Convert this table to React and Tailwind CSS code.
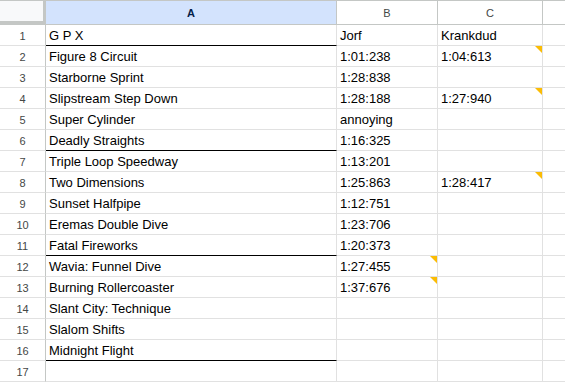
import React from "react"

const rows = [
  ["G P X", "Jorf", "Krankdud"],
  ["Figure 8 Circuit", "1:01:238", "1:04:613"],
  ["Starborne Sprint", "1:28:838", ""],
  ["Slipstream Step Down", "1:28:188", "1:27:940"],
  ["Super Cylinder", "annoying", ""],
  ["Deadly Straights", "1:16:325", ""],
  ["Triple Loop Speedway", "1:13:201", ""],
  ["Two Dimensions", "1:25:863", "1:28:417"],
  ["Sunset Halfpipe", "1:12:751", ""],
  ["Eremas Double Dive", "1:23:706", ""],
  ["Fatal Fireworks", "1:20:373", ""],
  ["Wavia: Funnel Dive", "1:27:455", ""],
  ["Burning Rollercoaster", "1:37:676", ""],
  ["Slant City: Technique", "", ""],
  ["Slalom Shifts", "", ""],
  ["Midnight Flight", "", ""],
  ["", "", ""],
]

// filas con linea negra debajo en la columna A
const blackRows = [1, 6, 11, 16]
// celdas con nota (triangulo naranja)
const notes = { "2-C": true, "4-C": true, "8-C": true, "12-B": true, "13-B": true }

function Note() {
  return (
    <span className="absolute top-0 right-0 w-0 h-0 border-l-[7px] border-l-transparent border-t-[7px] border-t-[#fbbc04]" />
  )
}

export default function App() {
  return (
    <div
      className="w-[565px] h-[382px] overflow-hidden bg-white text-[13px] text-black"
      style={{ fontFamily: "'Liberation Sans', Arial, sans-serif" }}
    >
      <div className="grid grid-cols-[46px_291px_101px_105px_1fr]">
        {/* cabecera */}
        <div className="h-[25px] bg-[#f8f9fa] border-r-[3px] border-b-[4px] border-[#c4c7c5] border-t border-t-[#c4c7c5]" />
        <div className="h-[25px] pt-[2px] bg-[#d3e3fd] border-r border-b border-t border-[#c4c7c5] flex items-center justify-center text-[11px] font-bold text-[#041e49]">
          A
        </div>
        <div className="h-[25px] pt-[2px] border-r border-b border-t border-[#c4c7c5] flex items-center justify-center text-[11px] text-[#444746]">
          B
        </div>
        <div className="h-[25px] pt-[2px] border-r border-b border-t border-[#c4c7c5] flex items-center justify-center text-[11px] text-[#444746]">
          C
        </div>
        <div className="h-[25px] border-b border-t border-[#c4c7c5]" />

        {rows.map((r, i) => {
          const n = i + 1
          const black = blackRows.includes(n)
          return (
            <React.Fragment key={n}>
              <div className="h-[21px] pt-[2px] border-r border-r-[#c4c7c5] border-b border-b-[#e1e1e1] flex items-center justify-center text-[11px] text-[#444746]">
                {n}
              </div>
              <div
                className={
                  "h-[21px] border-r border-r-[#e1e1e1] border-b flex items-end pl-[3px] " +
                  (black ? "border-b-black" : "border-b-[#e1e1e1]")
                }
              >
                {r[0]}
              </div>
              <div className="relative h-[21px] border-r border-b border-[#e1e1e1] flex items-end pl-[3px]">
                {r[1]}
                {notes[n + "-B"] && <Note />}
              </div>
              <div className="relative h-[21px] border-r border-b border-[#e1e1e1] flex items-end pl-[3px]">
                {r[2]}
                {notes[n + "-C"] && <Note />}
              </div>
              <div className="h-[21px] border-b border-[#e1e1e1]" />
            </React.Fragment>
          )
        })}
      </div>
    </div>
  )
}
